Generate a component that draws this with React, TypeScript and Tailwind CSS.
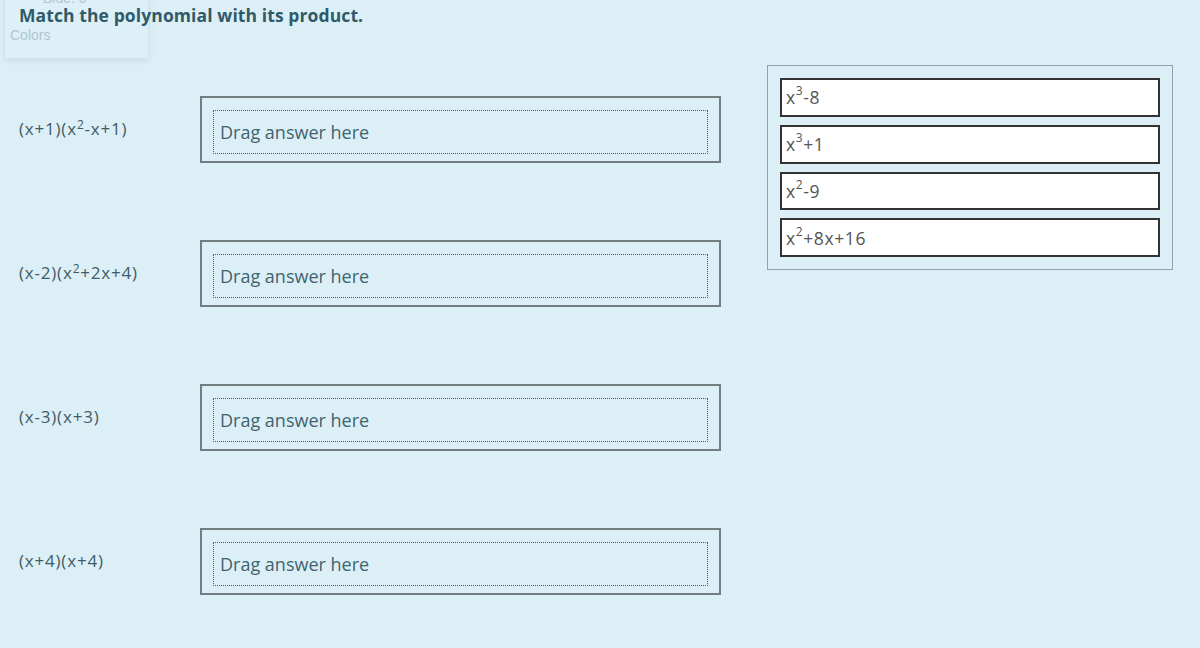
import React from 'react';

const rows = [
  { label: <>(x+1)(x<sup>2</sup>-x+1)</> },
  { label: <>(x-2)(x<sup>2</sup>+2x+4)</> },
  { label: <>(x-3)(x+3)</> },
  { label: <>(x+4)(x+4)</> },
];

const answers = [
  <>x<sup>3</sup>-8</>,
  <>x<sup>3</sup>+1</>,
  <>x<sup>2</sup>-9</>,
  <>x<sup>2</sup>+8x+16</>,
];

export default function App() {
  return (
    <div className="relative w-[1200px] h-[648px] overflow-hidden bg-[#ddeff6] font-['Open_Sans',sans-serif]">
      {/* faded color widget behind the title */}
      <div className="absolute left-[5px] top-[-10px] w-[143px] h-[68px] bg-[#ddf0f7] shadow-[0_2px_6px_rgba(120,150,160,0.25)] font-['Liberation_Sans',sans-serif] text-[14px] text-[#b3c4cb]">
        <div className="pl-[38px] leading-[16px]">Blue: 0</div>
        <div className="pl-[5px] mt-[21px] leading-[16px]">Colors</div>
      </div>

      <h1 className="relative pl-[19px] pt-[5px] text-[17.5px] leading-[20px] font-bold text-[#2f5a68] tracking-[0.1px]">
        Match the polynomial with its product.
      </h1>

      <div className="flex mt-[40px]">
        <div className="flex flex-col gap-[77px] pl-[19px] pt-[31px]">
          {rows.map((r, i) => (
            <div key={i} className="flex items-center h-[67px]">
              <div className="w-[181px] pb-[2px] text-[17px] tracking-[0.8px] text-[#3d5c67] [&_sup]:text-[12px]">{r.label}</div>
              <div className="w-[521px] h-full border-2 border-[#727d82] pt-[12px] pb-[7px] px-[11px]">
                <div className="h-full border border-dotted border-[#505a5e] flex items-center pl-[6px] text-[18px] text-[#3e6470]">
                  Drag answer here
                </div>
              </div>
            </div>
          ))}
        </div>

        <div className="ml-[46px] w-[406px] h-[205px] border border-[#8fa3ab] p-[12px] flex flex-col gap-[8px]">
          {answers.map((a, i) => (
            <div key={i} className="h-[39px] bg-white border-2 border-[#333] flex items-center pl-[4px] text-[17.5px] tracking-[0.6px] text-[#555] [&_sup]:text-[12px]">
              {a}
            </div>
          ))}
        </div>
      </div>
    </div>
  );
}
